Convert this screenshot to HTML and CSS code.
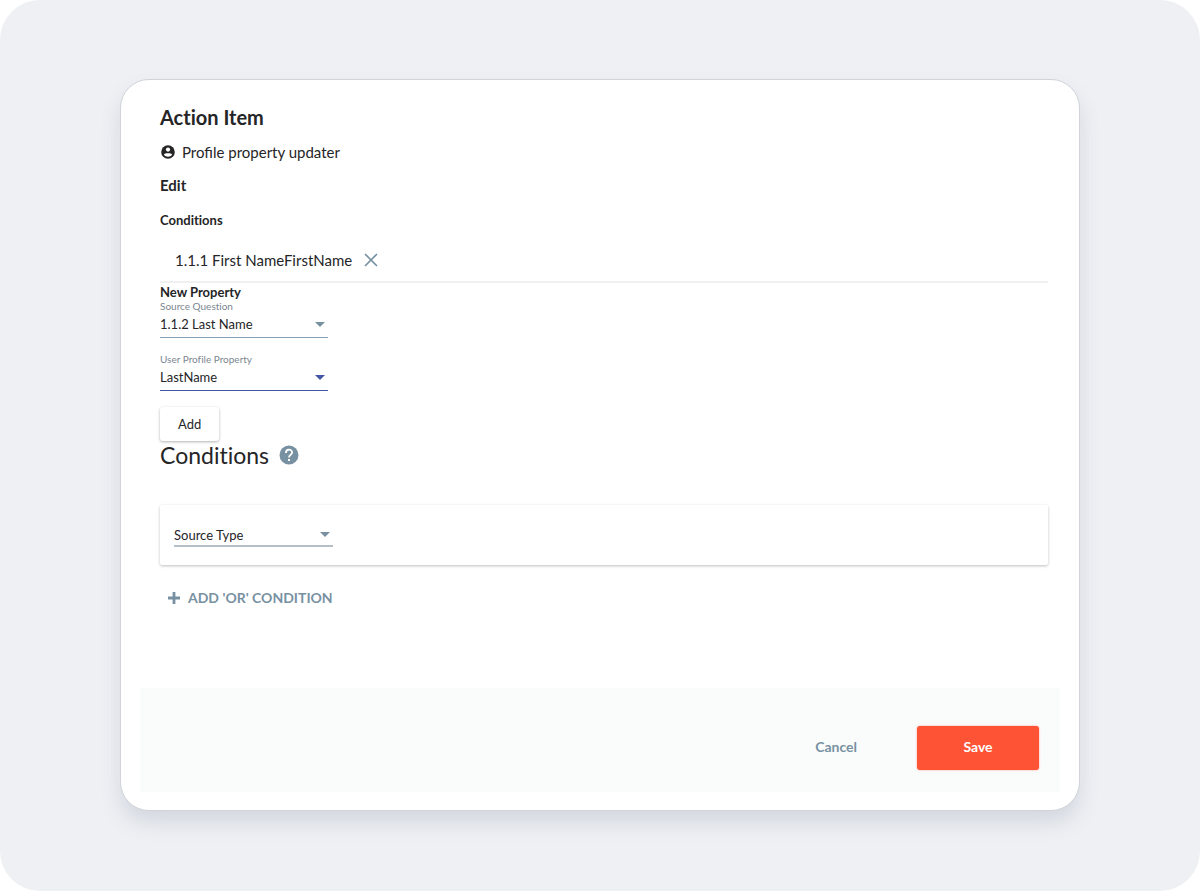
FILE: index.html
```html
<!DOCTYPE html>
<html lang="en">
<head>
<meta charset="utf-8">
<title>Action Item</title>
<link rel="stylesheet" href="styles.css">
</head>
<body>
<main class="stage">
  <form class="dialog">
    <div class="content">
      <h1 class="title">Action Item</h1>
      <p class="kind">
        <svg class="kind-icon" viewBox="0 0 16 16" aria-hidden="true"><circle cx="8" cy="8" r="6.8" fill="#252527"/><circle cx="8" cy="5.6" r="2.1" fill="#fff"/><path d="M3.8 10.4C4.8 8.7 11.2 8.7 12.2 10.4C10.2 13.4 5.8 13.4 3.8 10.4Z" fill="#fff"/></svg>
        Profile property updater
      </p>
      <h2 class="edit">Edit</h2>
      <h3 class="subhead">Conditions</h3>
      <div class="property">
        <span>1.1.1 First NameFirstName</span>
        <button class="remove" type="button" aria-label="Remove property"><svg viewBox="0 0 14 14"><path d="M1 1L13 13M13 1L1 13" fill="none" stroke="#7891a2" stroke-width="1.7"/></svg></button>
      </div>
      <h3 class="subhead new-property">New Property</h3>
      <div class="field">
        <label for="question">Source Question</label>
        <div class="select"><select id="question"><option>1.1.2 Last Name</option></select><svg class="caret" viewBox="0 0 10 5"><path d="M0 0H10L5 5Z"/></svg></div>
      </div>
      <div class="field active">
        <label for="profile">User Profile Property</label>
        <div class="select"><select id="profile"><option>LastName</option></select><svg class="caret" viewBox="0 0 10 5"><path d="M0 0H10L5 5Z"/></svg></div>
      </div>
      <button class="add" type="button">Add</button>
      <div class="section-head">
        <h2 class="section-title">Conditions</h2>
        <button class="help" type="button" aria-label="Help"><svg viewBox="0 0 20 20"><circle cx="10" cy="10" r="9.5" fill="#7891a2"/><path d="M6.9 8C6.9 3.6 13.1 3.7 13.1 7.5C13.1 9.7 10 10 10 12.4" fill="none" stroke="#fff" stroke-width="1.8"/><path d="M9 14H11V16H9Z" fill="#fff"/></svg></button>
      </div>
      <div class="condition">
        <div class="select source-type"><select aria-label="Source Type"><option>Source Type</option></select><svg class="caret" viewBox="0 0 10 5"><path d="M0 0H10L5 5Z"/></svg></div>
      </div>
      <button class="add-or" type="button"><svg viewBox="0 0 12 12"><path d="M6 0V12M0 6H12" stroke="#7891a2" stroke-width="2.8"/></svg>ADD 'OR' CONDITION</button>
    </div>
    <footer class="footer">
      <button class="cancel" type="button">Cancel</button>
      <button class="save" type="submit">Save</button>
    </footer>
  </form>
</main>
</body>
</html>
```
FILE: styles.css
```css
* { box-sizing: border-box; }
body { margin: 0; background: #fff; color: #252527; font-family: Lato, "Liberation Sans", sans-serif; }
h1, h2, h3, p { margin: 0; }
h1, h2, h3, label { font-variant-ligatures: none; }
button, select { font-family: inherit; color: inherit; border: 0; padding: 0; background: none; }
button { cursor: pointer; }
svg { display: block; flex: none; }

.stage { min-height: 100vh; padding: 79px 10% 80px; background: #eef0f4; border-radius: 40px; }
.dialog {
  padding: 24px 19px 18px;
  background: #fff;
  border: 1px solid #d0d4d8;
  border-radius: 29px;
  box-shadow: 0 12px 20px rgba(80, 95, 120, .16);
}
.content { display: flex; flex-direction: column; align-items: flex-start; padding: 0 12px 0 20px; }

.title { font-size: 20px; line-height: 26px; }
.kind { display: flex; align-items: center; gap: 6px; margin-top: 12px; font-size: 15px; line-height: 20px; }
.kind-icon { width: 16px; height: 16px; }
.edit { margin-top: 13px; font-size: 15px; line-height: 20px; }
.subhead { margin-top: 15px; font-size: 13px; line-height: 20px; }
.property {
  display: flex; align-items: center; gap: 12px; align-self: stretch;
  height: 53px; padding: 8px 15px 0; border-bottom: 2px solid #f0f0f1;
  font-size: 15px; line-height: 20px;
}
.remove svg { width: 14px; height: 14px; }
.new-property { margin-top: 0; line-height: 18px; }

.field { width: 168px; margin-bottom: 16px; }
.field label { display: block; color: #7c8791; font-size: 10px; line-height: 10px; }
.select { display: flex; align-items: center; border-bottom: 1px solid #86a0b8; color: #7891a2; }
.select select { flex: 1; width: 100%; height: 26px; appearance: none; color: #252527; font-size: 13px; }
.caret { width: 10px; height: 5px; margin: 0 3px 0 -13px; fill: currentColor; pointer-events: none; }
.active .select { color: #4356a6; border-color: #4356a6; }

.add {
  height: 34px; padding: 0 18px; background: #fff; border-radius: 3px;
  box-shadow: 0 1px 3px rgba(0, 0, 0, .3); font-size: 13px;
}
.section-head { display: flex; align-items: center; gap: 10px; }
.section-title { font-size: 23px; font-weight: 400; line-height: 28px; }
.help svg { width: 20px; height: 20px; }

.condition {
  align-self: stretch; margin-top: 36px; padding: 19px 14px 18px; background: #fff;
  border-radius: 2px; box-shadow: 0 1px 3px rgba(0, 0, 0, .26);
}
.source-type { width: 159px; border-bottom: 2px solid #b4c1ca; }
.source-type select { height: 21px; }

.add-or {
  display: flex; align-items: center; gap: 8px; margin: 23px 0 0 8px;
  color: #7891a2; font-size: 14px; font-weight: 700; line-height: 20px;
}
.add-or svg { width: 12px; height: 12px; }

.footer {
  display: flex; align-items: center; justify-content: flex-end; gap: 60px;
  margin-top: 80px; padding: 38px 21px 22px; background: #fafcfc;
}
.cancel, .save { padding-bottom: 3px; font-size: 14px; font-weight: 700; }
.cancel { color: #7891a2; }
.save { width: 122px; height: 44px; background: #ff5336; color: #fff; border-radius: 3px; box-shadow: 0 0 2px rgba(255, 83, 54, .6); }
```
